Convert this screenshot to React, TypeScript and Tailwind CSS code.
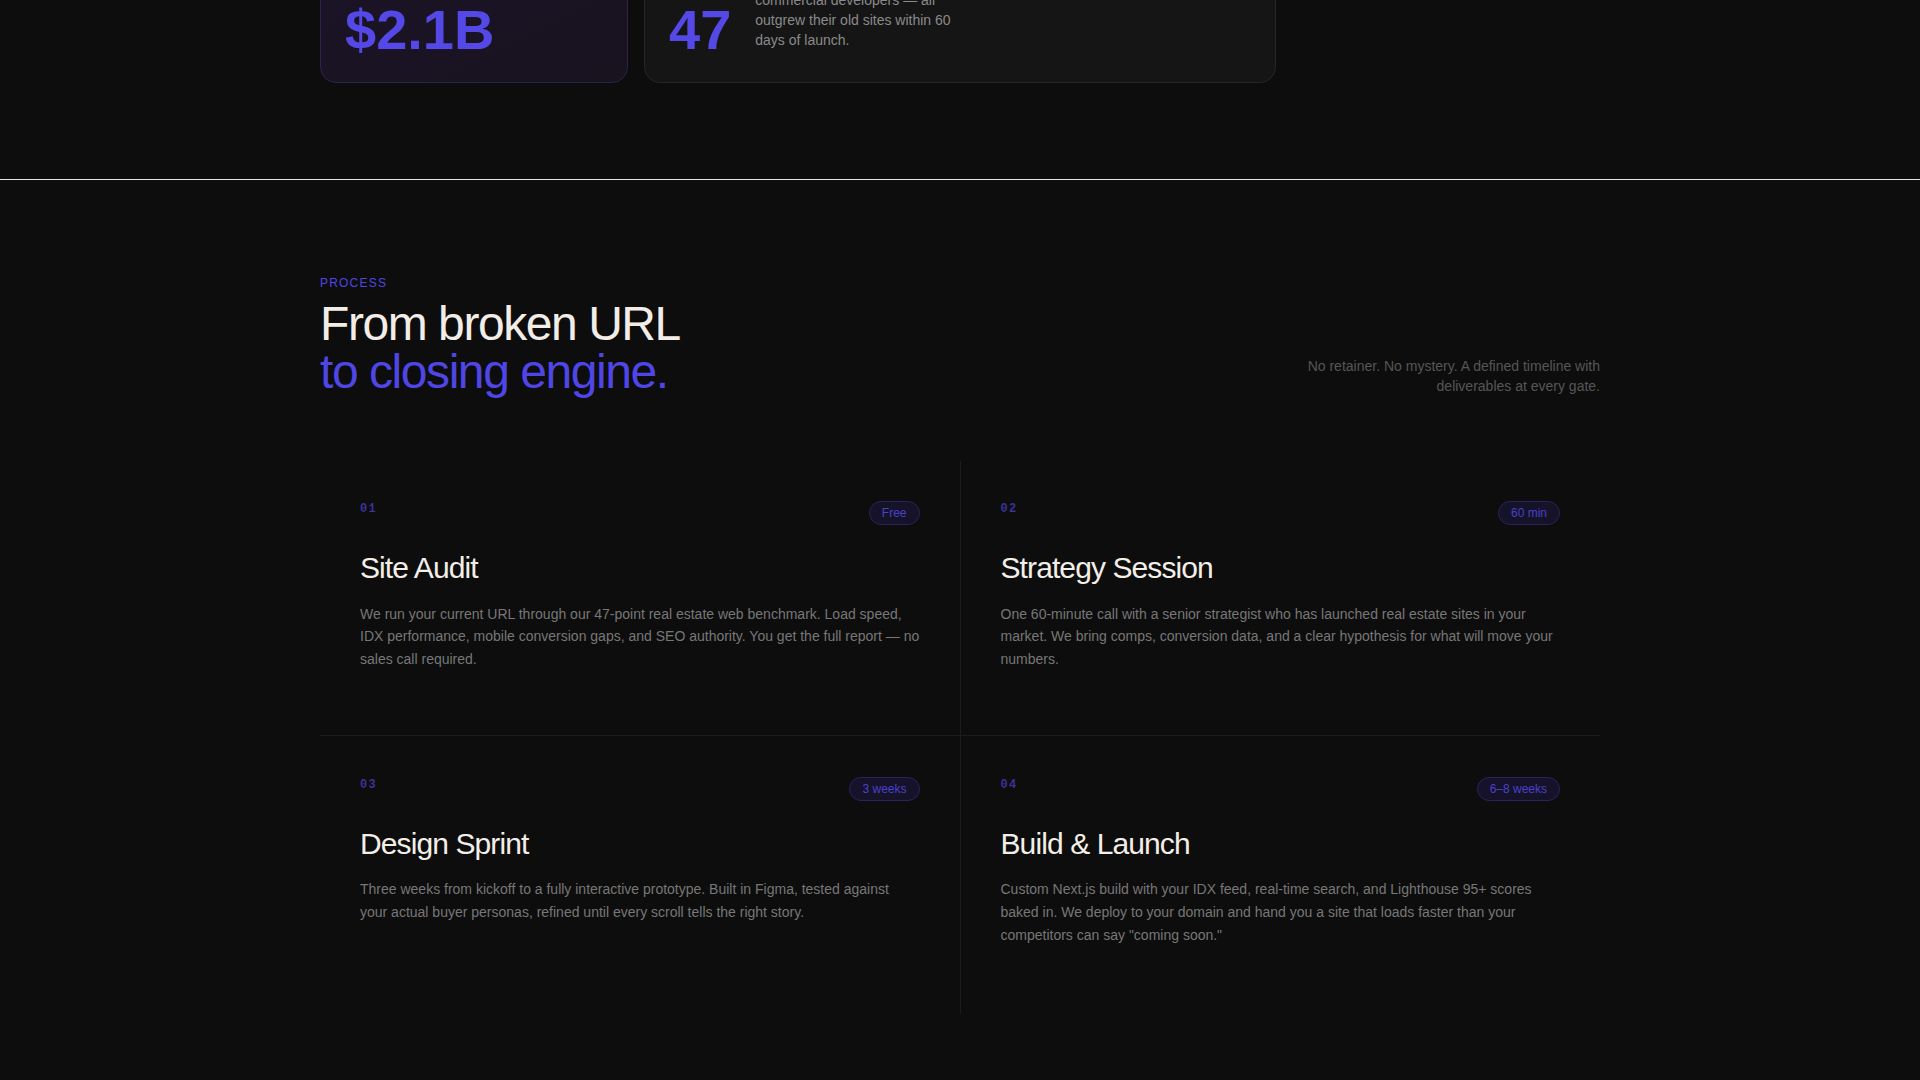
const steps = [
  {
    n: "01",
    badge: "Free",
    title: "Site Audit",
    body: "We run your current URL through our 47-point real estate web benchmark. Load speed, IDX performance, mobile conversion gaps, and SEO authority. You get the full report — no sales call required.",
  },
  {
    n: "02",
    badge: "60 min",
    title: "Strategy Session",
    body: "One 60-minute call with a senior strategist who has launched real estate sites in your market. We bring comps, conversion data, and a clear hypothesis for what will move your numbers.",
  },
  {
    n: "03",
    badge: "3 weeks",
    title: "Design Sprint",
    body: "Three weeks from kickoff to a fully interactive prototype. Built in Figma, tested against your actual buyer personas, refined until every scroll tells the right story.",
  },
  {
    n: "04",
    badge: "6–8 weeks",
    title: "Build & Launch",
    body: "Custom Next.js build with your IDX feed, real-time search, and Lighthouse 95+ scores baked in. We deploy to your domain and hand you a site that loads faster than your competitors can say \"coming soon.\"",
  },
];

function StepCell({ step, last }: { step: (typeof steps)[number]; last: boolean }) {
  return (
    <div className={last ? "bg-[#0d0d0d] px-10 pt-[41px] pb-[67px]" : "bg-[#0d0d0d] px-10 pt-10 pb-16"}>
      <div className="mb-6 flex items-start justify-between">
        <span className="font-['Liberation_Mono',monospace] text-xs font-semibold leading-4 tracking-[0.1em] text-[#3a3296]">
          {step.n}
        </span>
        <span className="rounded-full border border-[#29235a] bg-[#15122a] px-3 py-[3px] text-xs leading-4 text-[#4a42c8]">
          {step.badge}
        </span>
      </div>
      <h3 className="mb-4 text-[30px] leading-tight tracking-[-0.03em] text-[#f3efe8]">
        {step.title}
      </h3>
      <p className="text-sm leading-relaxed text-[#777777]">{step.body}</p>
    </div>
  );
}

export default function App() {
  return (
    <div className="h-screen overflow-hidden bg-[#0d0d0d] font-['Liberation_Sans',Arial,sans-serif]">
      {/* stats strip, scrolled partly out of view */}
      <section className="-mt-[63px] border-b border-[#e6e6e6] pb-24">
        <div className="mx-auto grid max-w-[1280px] grid-cols-4 gap-4">
          <div className="rounded-2xl border border-[#2b2447] bg-gradient-to-br from-[#1a1428] to-[#19121f] p-6">
            <p className="text-xs leading-4 text-[#6b6b6b]">Listings sold through our sites</p>
            <p className="mt-6 text-[56px] font-bold leading-none text-[#5448e6]">$2.1B</p>
          </div>
          <div className="col-span-2 flex items-end gap-6 rounded-2xl border border-[#262626] bg-[#151515] p-6">
            <p className="text-[56px] font-bold leading-none text-[#5448e6]">47</p>
            <p className="mb-2 max-w-[205px] text-sm leading-5 text-[#8a8a8a]">
              Brokerages, luxury teams and commercial developers — all outgrew their old sites within 60 days of launch.
            </p>
          </div>
        </div>
      </section>

      <section className="pt-[94px]">
        <div className="mx-auto max-w-[1280px]">
          <div className="mb-[65px] flex items-end justify-between">
            <div>
              <p className="mb-2 text-xs leading-[18px] tracking-[0.1em] text-[#4f46e5]">PROCESS</p>
              <h2 className="text-[48px] leading-none tracking-[-0.03em] text-[#f2eee7]">
                From broken URL
                <br />
                <span className="text-[#4f46e5]">to closing engine.</span>
              </h2>
            </div>
            <p className="max-w-xs text-right text-sm leading-5 text-[#565656]">
              No retainer. No mystery. A defined timeline with deliverables at every gate.
            </p>
          </div>

          <div className="grid grid-cols-2 gap-px bg-[#1c1c1c]">
            {steps.map((s, i) => (
              <StepCell key={s.n} step={s} last={i >= 2} />
            ))}
          </div>
        </div>
      </section>
    </div>
  );
}
